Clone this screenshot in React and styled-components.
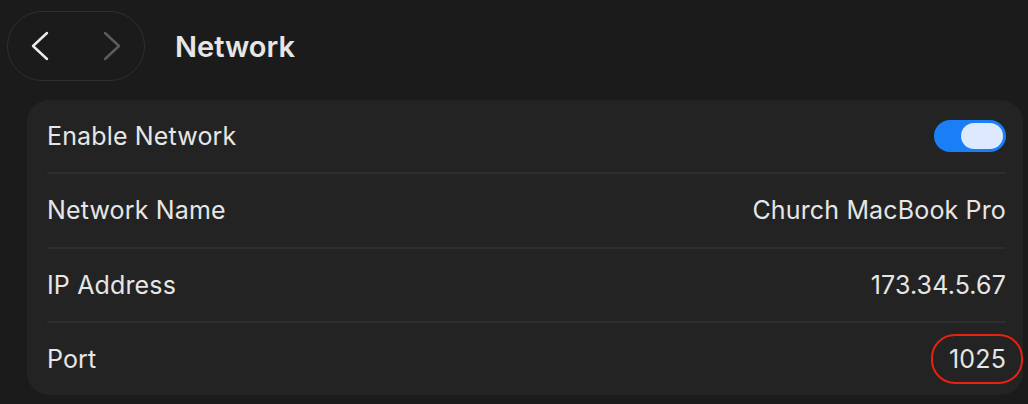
import React from "react";
import styled, { createGlobalStyle } from "styled-components";

const Global = createGlobalStyle`
  html, body { margin: 0; padding: 0; background: #1b1b1b; }
  body { font-family: Inter, "Noto Sans", sans-serif; -webkit-font-smoothing: antialiased; }
`;

const Page = styled.div`
  width: 1028px;
  height: 404px;
  background: #1b1b1b;
  box-sizing: border-box;
  padding: 11px 5px 0 7px;
  display: flex;
  flex-direction: column;
`;

const Header = styled.div`
  display: flex;
  align-items: center;
  gap: 30px;
  height: 70px;
`;

const NavPill = styled.div`
  width: 138px;
  height: 70px;
  box-sizing: border-box;
  border: 1px solid #2f2f2f;
  border-radius: 35px;
  display: flex;
  align-items: center;
  justify-content: space-between;
  padding: 0 23px;
`;

const NavButton = styled.div`
  display: flex;
  align-items: center;
  justify-content: center;
  color: ${(p) => (p.$disabled ? "#5c5c5c" : "#ececec")};
`;

const Title = styled.h1`
  margin: 0;
  font-size: 29px;
  font-weight: 600;
  color: #e6e6e6;
`;

const Card = styled.div`
  margin: 19px 0 0 20px;
  background: #232323;
  border-radius: 22px;
  padding: 0 17px 0 20px;
  display: flex;
  flex-direction: column;
  height: 295px;
  box-sizing: border-box;
`;

const Row = styled.div`
  flex: 1;
  display: flex;
  align-items: center;
  justify-content: space-between;
  border-top: ${(p) => (p.$first ? "none" : "2px solid #2d2d2d")};
  font-size: 25px;
  letter-spacing: 0.15px;
  color: #e6e6e6;
`;

const Value = styled.span`
  position: relative;
  color: #e6e6e6;
`;

const Highlight = styled.span`
  position: absolute;
  left: -18px;
  right: -17px;
  top: -10px;
  bottom: -10px;
  border: 2px solid #e8220f;
  border-radius: 24px;
`;

const Toggle = styled.div`
  width: 72px;
  height: 32px;
  border-radius: 16px;
  background: #1a7ef6;
  display: flex;
  align-items: center;
  justify-content: flex-end;
  padding: 0 3px;
  box-sizing: border-box;
`;

const Knob = styled.div`
  width: 42px;
  height: 26px;
  border-radius: 13px;
  background: #dde9ff;
`;

const Chevron = ({ dir }) => (
  <svg width="18" height="30" viewBox="0 0 18 30" fill="none">
    <path
      d={dir === "left" ? "M16 2 L2 15 L16 28" : "M2 2 L16 15 L2 28"}
      stroke="currentColor"
      strokeWidth="2.4"
      strokeLinecap="round"
      strokeLinejoin="round"
    />
  </svg>
);

export default function App() {
  return (
    <>
      <Global />
      <Page>
        <Header>
          <NavPill>
            <NavButton>
              <Chevron dir="left" />
            </NavButton>
            <NavButton $disabled>
              <Chevron dir="right" />
            </NavButton>
          </NavPill>
          <Title>Network</Title>
        </Header>
        <Card>
          <Row $first>
            <span>Enable Network</span>
            <Toggle>
              <Knob />
            </Toggle>
          </Row>
          <Row>
            <span>Network Name</span>
            <Value>Church MacBook Pro</Value>
          </Row>
          <Row>
            <span>IP Address</span>
            <Value>173.34.5.67</Value>
          </Row>
          <Row>
            <span>Port</span>
            <Value>
              1025
              <Highlight />
            </Value>
          </Row>
        </Card>
      </Page>
    </>
  );
}
